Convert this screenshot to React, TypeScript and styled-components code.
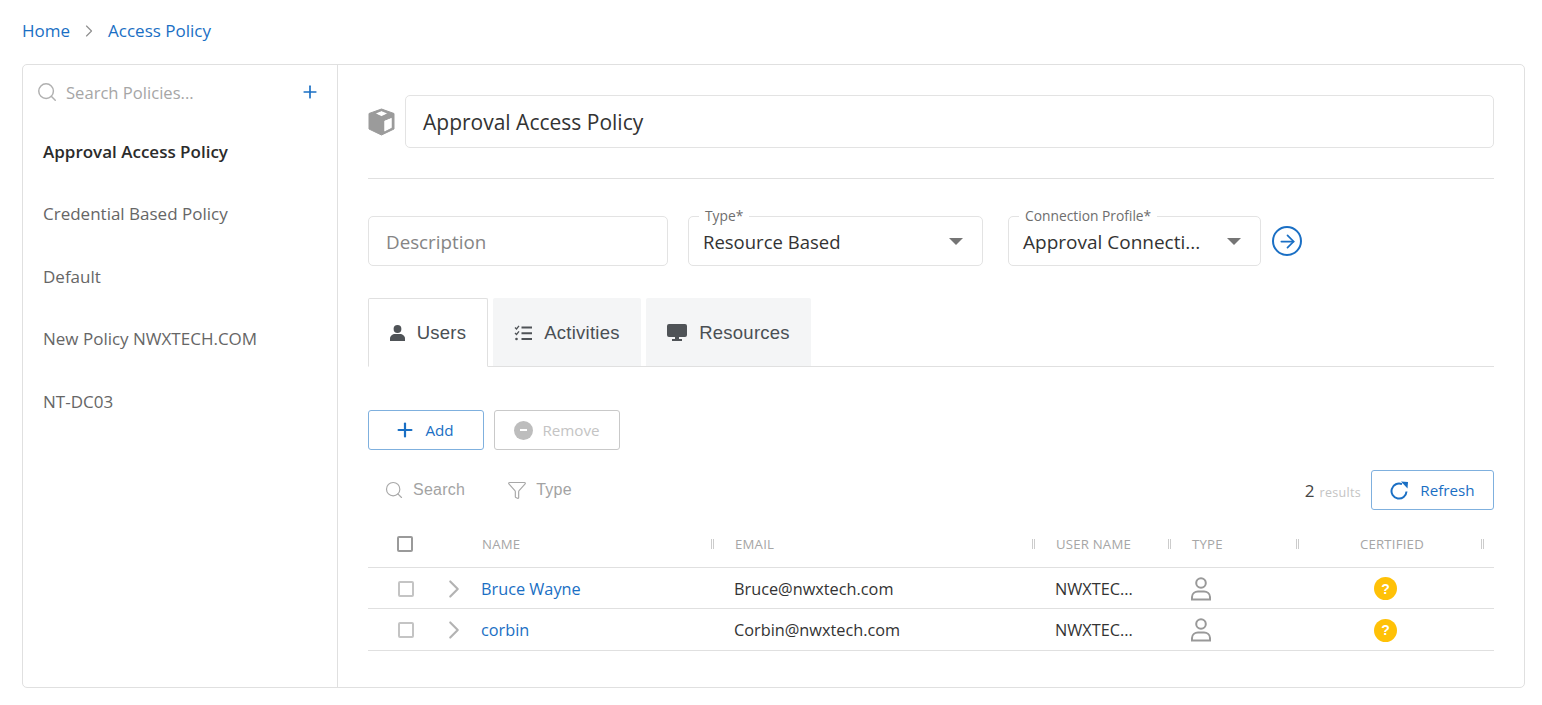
import React from "react";
import styled, { createGlobalStyle } from "styled-components";
import { ChevronRight, Search, Plus, ArrowRight, Filter } from "lucide-react";

const Global = createGlobalStyle`
  html, body { margin: 0; padding: 0; background: #fff; }
  body { font-family: "Open Sans", "Noto Sans", sans-serif; color: #333; }
  * { box-sizing: border-box; }
`;
const BLUE = "#1a6fc4";
const Page = styled.div`width: 1542px; height: 705px; padding: 0 17px 0 22px; overflow: hidden;`;
const Crumbs = styled.nav`height: 64px; display: flex; align-items: center; padding-bottom: 3px; font-size: 17px; color: ${BLUE};`;
const CrumbSep = styled.span`display: flex; color: #8f8f8f; margin: 0 9px 0 9px;`;
const Panel = styled.div`width: 1503px; height: 624px; border: 1px solid #e0e0e0; border-radius: 5px; display: flex;`;
const Sidebar = styled.aside`width: 315px; flex: none; border-right: 1px solid #e0e0e0;`;
const SideSearch = styled.div`height: 54px; display: flex; align-items: center; padding: 0 17px 0 13px; color: #a8a8a8; font-size: 16.6px;`;
const SideSearchText = styled.span`margin-left: 8px; flex: 1; color: #a6a6a6;`;
const PolicyList = styled.div`display: flex; flex-direction: column; padding: 1px 0 0 20px;`;
const PolicyItem = styled.div<{ $active?: boolean }>`
  height: 62.5px; display: flex; align-items: center; font-size: 17px;
  color: ${(p) => (p.$active ? "#2b2b2b" : "#666")};
  font-weight: ${(p) => (p.$active ? 600 : 400)};
`;
const Main = styled.main`flex: 1; padding: 30px 30px 0;`;
const TitleRow = styled.div`display: flex; align-items: center; gap: 10px; padding-bottom: 30px; border-bottom: 1px solid #e0e0e0;`;
const TitleInput = styled.div`flex: 1; height: 53px; border: 1px solid #e3e3e3; border-radius: 5px; display: flex; align-items: center; padding-left: 17px; font-size: 21px; color: #333;`;
const FieldRow = styled.div`display: flex; align-items: center; margin-top: 37px;`;
const Field = styled.div<{ $w: number; $mr: number; $fs?: number }>`
  position: relative; width: ${(p) => p.$w}px; margin-right: ${(p) => p.$mr}px; height: 50px;
  border: 1px solid #e3e3e3; border-radius: 5px; display: flex; align-items: center;
  justify-content: space-between; padding: ${(p) => (p.$fs ? 1 : 0)}px 19px 0 14px; font-size: ${(p) => p.$fs ?? 18.5}px; color: #333;
`;
const Placeholder = styled.span`color: #858585; padding-left: 3px;`;
const FloatLabel = styled.span`position: absolute; top: -10px; left: 10px; padding: 0 6px; background: #fff; font-size: 13.8px; line-height: 17px; color: #6e6e6e;`;
const Caret = styled.span`width: 0; height: 0; border-left: 7px solid transparent; border-right: 7px solid transparent; border-top: 7px solid #757575;`;
const ArrowCircle = styled.span`width: 30px; height: 30px; margin-left: -9px; border: 2px solid ${BLUE}; border-radius: 50%; display: flex; align-items: center; justify-content: center; color: ${BLUE};`;
const Tabs = styled.div`display: flex; gap: 5px; margin-top: 32px; height: 69px; border-bottom: 1px solid #e0e0e0;`;
const Tab = styled.div<{ $w: number; $active?: boolean }>`
  width: ${(p) => p.$w}px; height: ${(p) => (p.$active ? "69px" : "68px")};
  padding-top: ${(p) => (p.$active ? 0 : 1)}px;
  display: flex; align-items: center; justify-content: center; gap: 12px;
  font-family: "Liberation Sans", Arial, sans-serif; font-size: 18.5px; color: #4a4f54; letter-spacing: 0.25px;
  background: ${(p) => (p.$active ? "#fff" : "#f4f5f6")};
  border: ${(p) => (p.$active ? "1px solid #e0e0e0" : "none")};
  border-bottom: ${(p) => (p.$active ? "1px solid #fff" : "none")};
  border-radius: 2px 2px 0 0;
`;
const Actions = styled.div`display: flex; gap: 10px; margin-top: 43px;`;
const Btn = styled.div<{ $w: number; $disabled?: boolean; $gap?: number; $pr?: number }>`
  width: ${(p) => p.$w}px; height: 40px; border: 1px solid ${(p) => (p.$disabled ? "#c9c9c9" : "#7fb0de")}; border-radius: 3px;
  padding-right: ${(p) => p.$pr ?? 0}px;
  display: flex; align-items: center; justify-content: center; gap: ${(p) => p.$gap ?? 9}px; font-size: 15.2px;
  color: ${(p) => (p.$disabled ? "#c4c4c4" : BLUE)};
`;
const MinusDot = styled.span`width: 19px; height: 19px; border-radius: 50%; background: #bdbdbd; display: flex; align-items: center; justify-content: center;
  &::before { content: ""; width: 7px; height: 2px; background: #fff; }
`;
const Toolbar = styled.div`display: flex; align-items: center; justify-content: space-between; height: 40px; margin-top: 20px;`;
const Filters = styled.div`display: flex; align-items: center; padding-left: 16px; font-size: 16px; color: #a3a3a3;`;
const FilterItem = styled.span<{ $ml?: number }>`display: flex; align-items: center; gap: 9px; margin-left: ${(p) => p.$ml ?? 0}px; font-family: "Liberation Sans", Arial, sans-serif; letter-spacing: .25px;`;
const Results = styled.div`display: flex; align-items: center; gap: 10px;`;
const Count = styled.span`font-size: 17px; color: #444; display: flex; align-items: baseline; gap: 5px;`;
const CountLabel = styled.span`font-size: 12.5px; color: #c4c4c4; letter-spacing: .3px;`;
const Row = styled.div<{ $h: number }>`
  display: grid; grid-template-columns: 114px 253px 321px 136px 128px 174px; height: ${(p) => p.$h}px;
  padding-top: 1px;
  border-bottom: 1px solid #e0e0e0; align-items: center; font-size: 16.3px; color: #333;
`;
const Head = styled(Row)`margin-top: 10px; padding-top: 0; font-size: 13.2px; color: #a6a6a6; letter-spacing: .2px;`;
const HeadCell = styled.div<{ $ml?: number; $pr?: number }>`display: flex; align-items: center; justify-content: space-between; padding-left: ${(p) => p.$ml ?? 0}px; padding-right: ${(p) => p.$pr ?? 21}px;`;
const Grip = styled.span`width: 3px; height: 10px; border-left: 1px solid #ccc; border-right: 1px solid #ccc;`;
const SelectCell = styled.div`display: flex; align-items: center; padding-left: 29px;`;
const Check = styled.span<{ $dark?: boolean }>`width: 16px; height: 16px; border: 2px solid ${(p) => (p.$dark ? "#9a9a9a" : "#c4c4c4")}; border-radius: 2px; flex: none; margin-left: ${(p) => (p.$dark ? 0 : 1)}px;`;
const Expander = styled.span`display: flex; margin-left: 25px; color: #b3b3b3;`;
const NameLink = styled.span`color: ${BLUE}; margin-left: -1px;`;
const Cell = styled.div<{ $ml?: number }>`display: flex; margin-left: ${(p) => p.$ml ?? -1}px;`;
const Badge = styled.span`margin-left: 54px; width: 23px; height: 23px; border-radius: 50%; background: #ffc107; color: #fff; font-size: 14px; font-weight: 700; display: flex; align-items: center; justify-content: center; font-family: "Liberation Sans", sans-serif;`;

const Cube = () => (
  <svg width="27" height="28" viewBox="0 0 27 28"><path fill="#9b9b9b" stroke="#9b9b9b" strokeWidth="1" strokeLinejoin="round" fillRule="evenodd" d="M13.500 1 26 5.500V21L13.500 27 1 21V5.500ZM13.500 3 7.500 5.600 13.500 8.200 19.500 5.600ZM16 12.500V24L24 20V9.500Z" /><path fill="#fff" d="M16.500 13V23.200L23.500 19.700V10ZM13.500 3.300 8 5.600 13.500 7.900 19 5.600Z" /></svg>
);
const Person = () => (
  <svg width="15" height="16" viewBox="0 0 15 16"><circle cx="7.500" cy="4" r="3.900" fill="#4f5357" /><path fill="#4f5357" d="M0 16v-2.400C0 10.800 2.600 9 5 9h5c2.400 0 5 1.800 5 4.600V16z" /></svg>
);
const Monitor = () => (
  <svg width="20" height="17" viewBox="0 0 20 17"><path fill="#4f5357" fillRule="evenodd" d="M2 0h16a2 2 0 0 1 2 2v9a2 2 0 0 1-2 2h-6v2h3v2H5v-2h3v-2H2a2 2 0 0 1-2-2V2a2 2 0 0 1 2-2Z" /></svg>
);
const ActivitiesIcon = () => (
  <svg width="18" height="16" viewBox="0 0 18 16" fill="none" stroke="#4f5357"><path strokeWidth="1.300" d="M1 2.500 2.500 4 5 0.800M1 8 2.500 9.500 5 6.300" /><circle cx="2.500" cy="14" r="1.300" fill="#4f5357" stroke="none" /><path strokeWidth="2" d="M7.500 2.500H18M7.500 8.200H18M7.500 14H18" /></svg>
);
const RefreshIcon = () => (
  <svg width="19" height="19" viewBox="0 0 19 19" fill="none"><path stroke={BLUE} strokeWidth="2" d="M16.500 10.500A7.500 7.500 0 1 1 12 3.200" /><path fill={BLUE} d="M11 0.500 18 1 17.500 7.500Z" /></svg>
);
const UserOutline = () => (
  <svg width="22" height="24" viewBox="0 0 22 24" fill="none" stroke="#999" strokeWidth="2"><circle cx="11" cy="6" r="4.800" /><path d="M2 22.500v-2.500C2 16.500 5 14.500 8 14.500h6c3 0 6 2 6 5.500v2.500Z" /></svg>
);

const rows = [
  { name: "Bruce Wayne", email: "Bruce@nwxtech.com", h: 41 },
  { name: "corbin", email: "Corbin@nwxtech.com", h: 42 },
];

export default function App() {
  return (
    <Page>
      <Global />
      <Crumbs>
        Home
        <CrumbSep><ChevronRight size={20} strokeWidth={1.4} /></CrumbSep>
        Access Policy
      </Crumbs>
      <Panel>
        <Sidebar>
          <SideSearch>
            <Search size={22} strokeWidth={1.6} color="#b0b0b0" />
            <SideSearchText>Search Policies...</SideSearchText>
            <Plus size={20} strokeWidth={2} color={BLUE} />
          </SideSearch>
          <PolicyList>
            <PolicyItem $active>Approval Access Policy</PolicyItem>
            <PolicyItem>Credential Based Policy</PolicyItem>
            <PolicyItem>Default</PolicyItem>
            <PolicyItem>New Policy NWXTECH.COM</PolicyItem>
            <PolicyItem>NT-DC03</PolicyItem>
          </PolicyList>
        </Sidebar>
        <Main>
          <TitleRow>
            <Cube />
            <TitleInput>Approval Access Policy</TitleInput>
          </TitleRow>
          <FieldRow>
            <Field $w={300} $mr={20} $fs={18.8}><Placeholder>Description</Placeholder></Field>
            <Field $w={295} $mr={25}><FloatLabel>Type*</FloatLabel>Resource Based<Caret /></Field>
            <Field $w={253} $mr={20} $fs={19}><FloatLabel>Connection Profile*</FloatLabel>Approval Connecti...<Caret /></Field>
            <ArrowCircle><ArrowRight size={21} strokeWidth={2} /></ArrowCircle>
          </FieldRow>
          <Tabs>
            <Tab $w={120} $active><Person />Users</Tab>
            <Tab $w={148}><ActivitiesIcon />Activities</Tab>
            <Tab $w={165}><Monitor />Resources</Tab>
          </Tabs>
          <Actions>
            <Btn $w={116} $pr={4}><Plus size={22} strokeWidth={2.4} />Add</Btn>
            <Btn $w={126} $disabled><MinusDot />Remove</Btn>
          </Actions>
          <Toolbar>
            <Filters>
              <FilterItem><Search size={20} strokeWidth={1.4} color="#a8a8a8" />Search</FilterItem>
              <FilterItem $ml={42}><Filter size={20} strokeWidth={1.4} color="#a8a8a8" />Type</FilterItem>
            </Filters>
            <Results>
              <Count>2 <CountLabel>results</CountLabel></Count>
              <Btn $w={123} $gap={11}><RefreshIcon />Refresh</Btn>
            </Results>
          </Toolbar>
          <Head $h={48}>
            <SelectCell><Check $dark /></SelectCell>
            <HeadCell>NAME<Grip /></HeadCell>
            <HeadCell>EMAIL<Grip /></HeadCell>
            <HeadCell>USER NAME<Grip /></HeadCell>
            <HeadCell>TYPE<Grip /></HeadCell>
            <HeadCell $ml={40} $pr={10}>CERTIFIED<Grip /></HeadCell>
          </Head>
          {rows.map((r) => (
            <Row key={r.name} $h={r.h}>
              <SelectCell><Check /><Expander><ChevronRight size={30} strokeWidth={1.7} /></Expander></SelectCell>
              <NameLink>{r.name}</NameLink>
              <Cell>{r.email}</Cell>
              <Cell>NWXTEC...</Cell>
              <Cell $ml={-2}><UserOutline /></Cell>
              <Badge>?</Badge>
            </Row>
          ))}
        </Main>
      </Panel>
    </Page>
  );
}
